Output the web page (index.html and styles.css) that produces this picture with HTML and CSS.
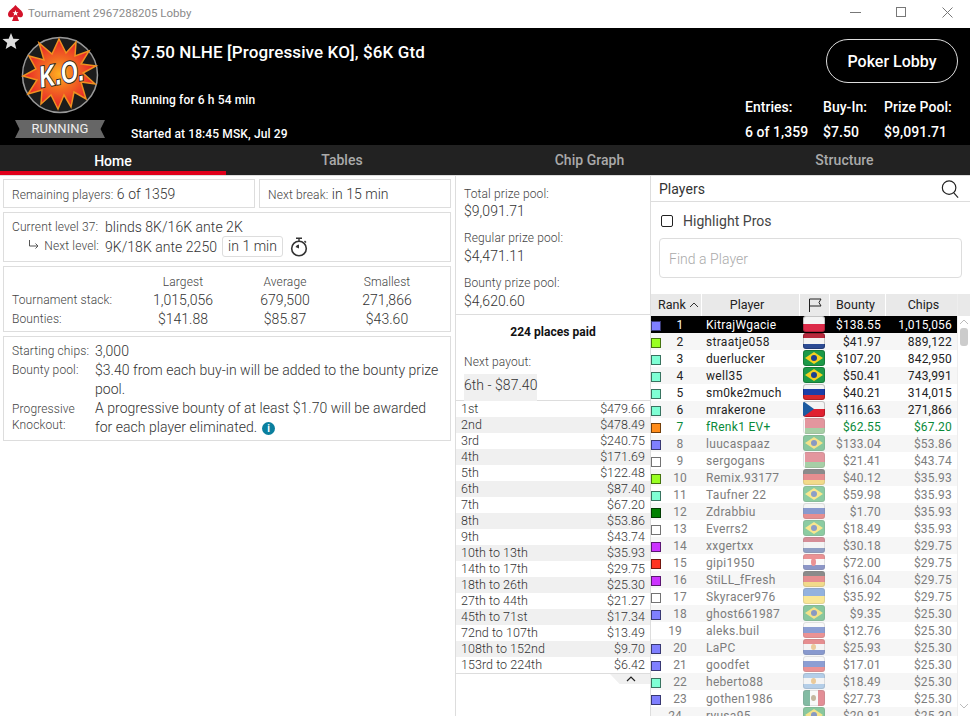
FILE: index.html
```html
<!doctype html>
<html lang="en">
  <head>
    <meta charset="UTF-8" />
    <title>Tournament 2967288205 Lobby</title>
    <link rel="stylesheet" href="styles.css">
  </head>

  <body>
    <div class="titlebar">
      <svg class="spade" viewBox="0 0 15 16" width="15" height="16">
        <path fill="#d3122a" d="M7.500 0 C9.500 3 15 5.500 15 9.500 C15 12.500 11.500 13 9.500 11.500 C9.700 13 10.200 14.500 11 16 L4 16 C4.800 14.500 5.300 13 5.500 11.500 C3.500 13 0 12.500 0 9.500 C0 5.500 5.500 3 7.500 0 Z" />
        <path fill="#fff" d="M7.500 5 L8.300 7.200 L10.500 7.300 L8.800 8.600 L9.400 10.700 L7.500 9.500 L5.600 10.700 L6.200 8.600 L4.500 7.300 L6.700 7.200 Z" />
      </svg>
      <span class="title-text">Tournament 2967288205 Lobby</span>
      <span class="window-btns">
        <svg viewBox="0 0 11 11" width="11" height="11"><path d="M0 5.500H11" stroke="#777" fill="none" /></svg>
        <svg viewBox="0 0 11 11" width="11" height="11"><rect x="0.500" y="0.500" width="9" height="9" stroke="#777" fill="none" /></svg>
        <svg viewBox="0 0 11 11" width="11" height="11"><path d="M0.500 0.500L10.500 10.500M10.500 0.500L0.500 10.500" stroke="#777" fill="none" /></svg>
      </span>
    </div>

    <header class="header">
      <svg class="fav-star" viewBox="0 0 20 20" width="18" height="18">
        <path fill="#ddd" d="M10 1 L12.600 7.400 L19.500 7.900 L14.200 12.300 L15.900 19 L10 15.400 L4.100 19 L5.800 12.300 L0.500 7.900 L7.400 7.400 Z" />
      </svg>
      <div class="logo-col">
        <svg class="ko-logo" viewBox="0 0 78 78" width="78" height="78">
          <defs>
            <radialGradient id="burst" cx="50%" cy="50%" r="50%">
              <stop offset="0" stop-color="#ffb020" />
              <stop offset="0.45" stop-color="#f26a21" />
              <stop offset="1" stop-color="#e8202a" />
            </radialGradient>
          </defs>
          <circle cx="39" cy="39" r="37.500" fill="#1c1c1c" stroke="#999" stroke-width="1.500" />
          <path fill="url(#burst)" stroke="#f09020" stroke-width="1.500" d="M38 3 L45 17 L55 6 L54 20 L68 15 L60 28 L75 30 L62 37 L74 48 L60 46 L65 63 L53 56 L50 71 L43 59 L37 73 L30 59 L20 68 L21 54 L7 58 L16 44 L2 40 L15 33 L8 20 L23 24 L18 7 L31 18 Z" />
          <text class="ko-text" x="18" y="48" textLength="45" lengthAdjust="spacingAndGlyphs" transform="rotate(-10 39 39)">K.O.</text>
        </svg>
        <div class="ribbon">RUNNING</div>
      </div>
      <div class="info-col">
        <h1 class="t-name">$7.50 NLHE [Progressive KO], $6K Gtd</h1>
        <p class="t-run">Running for 6 h 54 min</p>
        <p class="t-start">Started at 18:45 MSK, Jul 29</p>
      </div>
      <div class="right-col">
        <button class="lobby-btn">Poker Lobby</button>
        <div class="sums">
          <span>Entries:</span><span>Buy-In:</span><span>Prize Pool:</span>
          <span>6 of 1,359</span><span>$7.50</span><span>$9,091.71</span>
        </div>
      </div>
    </header>

    <nav class="tabs">
      <a class="tab active">Home</a>
      <a class="tab">Tables</a>
      <a class="tab">Chip Graph</a>
      <a class="tab">Structure</a>
    </nav>

    <main class="content">
      <section class="left">
        <div class="box-row">
          <div class="box box-players"><span class="lbl">Remaining players:</span> 6 of 1359</div>
          <div class="box box-break"><span class="lbl">Next break:</span> in 15 min</div>
        </div>
        <div class="box box-level">
          <span class="lbl">Current level 37:</span>
          <span>blinds 8K/16K ante 2K</span>
          <span class="lbl lbl-right">
            <svg class="arrow" viewBox="0 0 12 10" width="12" height="10"><path d="M1.500 0V6H10M7.500 3.500L10 6L7.500 8.500" fill="none" stroke="#555" /></svg>
            Next level:
          </span>
          <span class="next-val">9K/18K ante 2250
            <span class="pill">in 1 min</span>
            <svg class="watch" viewBox="0 0 18 20" width="18" height="20">
              <circle cx="9" cy="11.500" r="7.300" fill="none" stroke="#333" stroke-width="1.600" />
              <path d="M6 1.200H12M9 1.200V4M14.500 4L16 5.500" fill="none" stroke="#333" stroke-width="1.400" />
              <path d="M9 11.500V7.500A4 4 0 0 0 5.500 10Z" fill="#333" />
            </svg>
          </span>
        </div>
        <div class="box box-stats">
          <span></span><span class="lbl c">Largest</span><span class="lbl c">Average</span><span class="lbl c">Smallest</span>
          <span class="lbl">Tournament stack:</span><span class="c">1,015,056</span><span class="c">679,500</span><span class="c">271,866</span>
          <span class="lbl">Bounties:</span><span class="c">$141.88</span><span class="c">$85.87</span><span class="c">$43.60</span>
        </div>
        <div class="box box-desc">
          <span class="lbl">Starting chips:</span><span>3,000</span>
          <span class="lbl">Bounty pool:</span><span>$3.40 from each buy-in will be added to the bounty prize pool.</span>
          <span class="lbl lbl-tight">Progressive Knockout:</span>
          <span>A progressive bounty of at least $1.70 will be awarded for each player eliminated.<i class="info">i</i></span>
        </div>
      </section>

      <section class="mid">
        <div class="pools">
          <p class="lbl">Total prize pool:</p>
          <p>$9,091.71</p>
          <p class="lbl">Regular prize pool:</p>
          <p>$4,471.11</p>
          <p class="lbl">Bounty prize pool:</p>
          <p>$4,620.60</p>
        </div>
        <div class="paid">
          <p class="paid-title">224 places paid</p>
          <p class="lbl">Next payout:</p>
          <span class="next-payout">6th - $87.40</span>
        </div>
        <ul class="payouts">
          <li><span>1st</span><span>$479.66</span></li>
          <li><span>2nd</span><span>$478.49</span></li>
          <li><span>3rd</span><span>$240.75</span></li>
          <li><span>4th</span><span>$171.69</span></li>
          <li><span>5th</span><span>$122.48</span></li>
          <li><span>6th</span><span>$87.40</span></li>
          <li><span>7th</span><span>$67.20</span></li>
          <li><span>8th</span><span>$53.86</span></li>
          <li><span>9th</span><span>$43.74</span></li>
          <li><span>10th to 13th</span><span>$35.93</span></li>
          <li><span>14th to 17th</span><span>$29.75</span></li>
          <li><span>18th to 26th</span><span>$25.30</span></li>
          <li><span>27th to 44th</span><span>$21.27</span></li>
          <li><span>45th to 71st</span><span>$17.34</span></li>
          <li><span>72nd to 107th</span><span>$13.49</span></li>
          <li><span>108th to 152nd</span><span>$9.70</span></li>
          <li><span>153rd to 224th</span><span>$6.42</span></li>
        </ul>
        <div class="collapse-row">
          <div class="collapse-tab">
            <svg viewBox="0 0 10 6" width="10" height="6"><path d="M1 5L5 1L9 5" fill="none" stroke="#222" stroke-width="1.200" /></svg>
          </div>
        </div>
      </section>

      <section class="right">
        <div class="players-head">
          <span>Players</span>
          <svg viewBox="0 0 20 20" width="18" height="18"><circle cx="9" cy="8.500" r="7.500" fill="none" stroke="#222" stroke-width="1.300" /><path d="M14 14L19 19.500" stroke="#222" stroke-width="1.300" /></svg>
        </div>
        <label class="pros"><span class="check"></span>Highlight Pros</label>
        <div class="find">Find a Player</div>

        <div class="table-wrap">
          <div class="table-scroll">
            <div class="thead">
              <span>Rank<svg viewBox="0 0 10 6" width="10" height="6"><path d="M1 5L5 1L9 5" fill="none" stroke="#333" /></svg></span>
              <span>Player</span>
              <span><svg viewBox="0 0 14 14" width="14" height="14"><path d="M1.500 14V1H13L11 4.500L13 8H1.500" fill="none" stroke="#222" /></svg></span>
              <span>Bounty</span>
              <span>Chips</span>
            </div>
            <div class="tr sel"><span class="rank"><i class="chip c-blue"></i><b>1</b></span><span class="name">KitrajWgacie</span><span class="fl"><i class="flag pl"></i></span><span class="num">$138.55</span><span class="num">1,015,056</span></div>
            <div class="tr"><span class="rank"><i class="chip c-lime"></i><b>2</b></span><span class="name">straatje058</span><span class="fl"><i class="flag nl"></i></span><span class="num">$41.97</span><span class="num">889,122</span></div>
            <div class="tr"><span class="rank"><i class="chip c-aqua"></i><b>3</b></span><span class="name">duerlucker</span><span class="fl"><i class="flag br"></i></span><span class="num">$107.20</span><span class="num">842,950</span></div>
            <div class="tr"><span class="rank"><i class="chip c-aqua"></i><b>4</b></span><span class="name">well35</span><span class="fl"><i class="flag br"></i></span><span class="num">$50.41</span><span class="num">743,991</span></div>
            <div class="tr"><span class="rank"><i class="chip c-aqua"></i><b>5</b></span><span class="name">sm0ke2much</span><span class="fl"><i class="flag ru"></i></span><span class="num">$40.21</span><span class="num">314,015</span></div>
            <div class="tr"><span class="rank"><i class="chip c-aqua"></i><b>6</b></span><span class="name">mrakerone</span><span class="fl"><i class="flag cz"></i></span><span class="num">$116.63</span><span class="num">271,866</span></div>
            <div class="tr me"><span class="rank"><i class="chip c-orange"></i><b>7</b></span><span class="name">fRenk1 EV+</span><span class="fl"><i class="flag by"></i></span><span class="num">$62.55</span><span class="num">$67.20</span></div>
            <div class="tr out"><span class="rank"><i class="chip c-blue"></i><b>8</b></span><span class="name">luucaspaaz</span><span class="fl"><i class="flag br"></i></span><span class="num">$133.04</span><span class="num">$53.86</span></div>
            <div class="tr out"><span class="rank"><i class="chip c-white"></i><b>9</b></span><span class="name">sergogans</span><span class="fl"><i class="flag by"></i></span><span class="num">$21.41</span><span class="num">$43.74</span></div>
            <div class="tr out"><span class="rank"><i class="chip c-lime"></i><b>10</b></span><span class="name">Remix.93177</span><span class="fl"><i class="flag de"></i></span><span class="num">$40.12</span><span class="num">$35.93</span></div>
            <div class="tr out"><span class="rank"><i class="chip c-aqua"></i><b>11</b></span><span class="name">Taufner 22</span><span class="fl"><i class="flag br"></i></span><span class="num">$59.98</span><span class="num">$35.93</span></div>
            <div class="tr out"><span class="rank"><i class="chip c-green"></i><b>12</b></span><span class="name">Zdrabbiu</span><span class="fl"><i class="flag ru"></i></span><span class="num">$1.70</span><span class="num">$35.93</span></div>
            <div class="tr out"><span class="rank"><i class="chip c-white"></i><b>13</b></span><span class="name">Everrs2</span><span class="fl"><i class="flag br"></i></span><span class="num">$18.49</span><span class="num">$35.93</span></div>
            <div class="tr out"><span class="rank"><i class="chip c-purple"></i><b>14</b></span><span class="name">xxgertxx</span><span class="fl"><i class="flag nl"></i></span><span class="num">$30.18</span><span class="num">$29.75</span></div>
            <div class="tr out"><span class="rank"><i class="chip c-red"></i><b>15</b></span><span class="name">gipi1950</span><span class="fl"><i class="flag hr"></i></span><span class="num">$72.00</span><span class="num">$29.75</span></div>
            <div class="tr out"><span class="rank"><i class="chip c-purple"></i><b>16</b></span><span class="name">StiLL_fFresh</span><span class="fl"><i class="flag de"></i></span><span class="num">$16.04</span><span class="num">$29.75</span></div>
            <div class="tr out"><span class="rank"><i class="chip c-white"></i><b>17</b></span><span class="name">Skyracer976</span><span class="fl"><i class="flag ua"></i></span><span class="num">$35.92</span><span class="num">$29.75</span></div>
            <div class="tr out"><span class="rank"><i class="chip c-blue"></i><b>18</b></span><span class="name">ghost661987</span><span class="fl"><i class="flag br"></i></span><span class="num">$9.35</span><span class="num">$25.30</span></div>
            <div class="tr out"><span class="rank"><b>19</b></span><span class="name">aleks.buil</span><span class="fl"><i class="flag ru"></i></span><span class="num">$12.76</span><span class="num">$25.30</span></div>
            <div class="tr out"><span class="rank"><i class="chip c-blue"></i><b>20</b></span><span class="name">LaPC</span><span class="fl"><i class="flag py"></i></span><span class="num">$25.93</span><span class="num">$25.30</span></div>
            <div class="tr out"><span class="rank"><i class="chip c-blue"></i><b>21</b></span><span class="name">goodfet</span><span class="fl"><i class="flag ru"></i></span><span class="num">$17.01</span><span class="num">$25.30</span></div>
            <div class="tr out"><span class="rank"><i class="chip c-aqua"></i><b>22</b></span><span class="name">heberto88</span><span class="fl"><i class="flag ar"></i></span><span class="num">$18.49</span><span class="num">$25.30</span></div>
            <div class="tr out"><span class="rank"><i class="chip c-blue"></i><b>23</b></span><span class="name">gothen1986</span><span class="fl"><i class="flag mx"></i></span><span class="num">$27.73</span><span class="num">$25.30</span></div>
            <div class="tr out"><span class="rank"><b>24</b></span><span class="name">ryusa95</span><span class="fl"><i class="flag br"></i></span><span class="num">$20.81</span><span class="num">$25.30</span></div>
          </div>
          <div class="scrollbar">
            <svg viewBox="0 0 10 6" width="10" height="6"><path d="M1 5L5 1L9 5" fill="none" stroke="#bbb" /></svg>
            <div class="thumb"></div>
            <svg class="down" viewBox="0 0 10 6" width="10" height="6"><path d="M1 1L5 5L9 1" fill="none" stroke="#bbb" /></svg>
          </div>
        </div>
      </section>
    </main>
  </body>
</html>
```

FILE: styles.css
```css
html,
body {
  margin: 0;
  padding: 0;
}

body {
  width: 970px;
  height: 716px;
  overflow: hidden;
  background: white;
  color: #333;
  font-family: Roboto, "Liberation Sans", sans-serif;
  font-size: 14px;
  font-weight: 300;
  letter-spacing: 0.04px;
}

p,
h1,
ul {
  margin: 0;
  padding: 0;
}

.titlebar {
  height: 28px;
  display: flex;
  align-items: center;
  padding: 0 17px 3px 8px;
  box-sizing: border-box;
}

.title-text {
  margin-left: 5px;
  font-size: 11.500px;
  font-weight: 400;
  color: #8a8a8a;
  letter-spacing: 0;
}

.window-btns {
  margin-left: auto;
  display: flex;
  gap: 35px;
}

/* header */

.header {
  position: relative;
  height: 117px;
  background: black;
  color: white;
  display: flex;
  font-weight: 500;
}

.fav-star {
  position: absolute;
  left: 2px;
  top: 4px;
}

.logo-col {
  width: 120px;
  padding-top: 8px;
  box-sizing: border-box;
  display: flex;
  flex-direction: column;
  align-items: center;
}

.ko-text {
  font-family: "Liberation Sans", sans-serif;
  font-size: 30px;
  font-weight: bold;
  font-style: italic;
  fill: white;
  stroke: #222;
  stroke-width: 2px;
  paint-order: stroke;
}

.ribbon {
  margin-top: 6px;
  width: 90px;
  height: 18px;
  background: #666;
  color: #eee;
  font-size: 13px;
  font-weight: 400;
  line-height: 17px;
  text-align: center;
  clip-path: polygon(0 0, 100% 0, 95% 50%, 100% 100%, 0 100%, 5% 50%);
}

.info-col {
  margin-left: 11px;
  flex: 1;
}

.t-name {
  margin-top: 14px;
  font-size: 17px;
  font-weight: 500;
  letter-spacing: 0.12px;
  line-height: 20px;
}

.t-run {
  margin-top: 30px;
  font-size: 12px;
  letter-spacing: 0.12px;
  line-height: 16px;
}

.t-start {
  margin-top: 18px;
  font-size: 12px;
  letter-spacing: 0.12px;
  line-height: 16px;
}

.right-col {
  width: 225px;
  display: flex;
  flex-direction: column;
}

.lobby-btn {
  align-self: flex-end;
  margin: 11px 12px 0 0;
  width: 132px;
  height: 44px;
  background: black;
  border: 1px solid #ddd;
  border-radius: 22px;
  color: white;
  font-family: inherit;
  font-size: 16px;
  font-weight: 500;
}

.sums {
  margin-top: 16px;
  display: grid;
  grid-template-columns: 78px 61px auto;
  row-gap: 9px;
  font-size: 14px;
  line-height: 16px;
}

/* tabs */

.tabs {
  height: 30px;
  background: #222;
  display: grid;
  grid-template-columns: 226px 232px 263px 247px;
  color: #aaa;
  font-size: 14px;
  font-weight: 500;
}

.tab {
  text-align: center;
  line-height: 30px;
}

.tab.active {
  color: white;
  border-bottom: 4px solid #e0001b;
  height: 30px;
  box-sizing: border-box;
  line-height: 32px;
}

/* columns */

.content {
  height: 541px;
  display: flex;
  border-top: 1px solid #ddd;
  box-sizing: border-box;
}

.lbl {
  font-size: 12px;
  letter-spacing: 0.12px;
  color: #444;
}

.left {
  width: 456px;
  box-sizing: border-box;
  border-right: 1px solid #ddd;
  padding: 3px 3px 0 3px;
  display: flex;
  flex-direction: column;
  gap: 4px;
}

.box {
  border: 1px solid #ddd;
  box-sizing: border-box;
  padding-left: 8px;
  width: 448px;
}

.box-row {
  display: flex;
  gap: 4px;
}

.box-players {
  width: 252px;
  height: 29px;
  line-height: 29px;
}

.box-break {
  width: 192px;
  height: 29px;
  line-height: 29px;
}

.box-level {
  height: 50px;
  padding-top: 5px;
  display: grid;
  grid-template-columns: 87px auto;
  grid-auto-rows: 19px;
  column-gap: 6px;
  line-height: 18px;
}

.lbl-right {
  text-align: right;
  white-space: nowrap;
}

.arrow {
  margin-right: 1px;
}

.next-val {
  display: flex;
  align-items: center;
  gap: 5px;
}

.pill {
  border: 1px solid #ddd;
  border-radius: 3px;
  padding: 0 5px;
  line-height: 19px;
}

.watch {
  margin-left: 2px;
}

.box-stats {
  height: 66px;
  padding-top: 6px;
  display: grid;
  grid-template-columns: 120px 102px 102px 102px;
  grid-template-rows: 18px 18px 20px;
  align-items: center;
}

.c {
  text-align: center;
}

.box-desc {
  height: 105px;
  padding: 5px 8px 0 8px;
  display: grid;
  grid-template-columns: 83px auto;
  align-content: start;
  line-height: 19px;
}

.lbl-tight {
  line-height: 16px;
  padding-top: 2px;
}

.info {
  display: inline-block;
  width: 13px;
  height: 13px;
  border-radius: 50%;
  background: #0a7f9e;
  color: white;
  font-size: 10px;
  font-weight: 700;
  font-style: normal;
  line-height: 13px;
  text-align: center;
  margin-left: 5px;
}

.mid {
  width: 195px;
  box-sizing: border-box;
  border-right: 1px solid #ddd;
}

.pools {
  height: 139px;
  box-sizing: border-box;
  padding: 9px 8px 0;
  border-bottom: 1px solid #ddd;
  line-height: 18px;
}

.pools .lbl {
  margin-top: 9px;
}

.pools .lbl:first-child {
  margin-top: 0;
  margin-bottom: -1px;
}

.paid {
  height: 85px;
  box-sizing: border-box;
  padding: 9px 8px 0;
}

.paid-title {
  font-size: 12px;
  font-weight: 700;
  color: #111;
  text-align: center;
  line-height: 16px;
}

.paid .lbl {
  margin-top: 14px;
  line-height: 16px;
}

.next-payout {
  display: inline-block;
  margin-top: 4px;
  background: #f0f0f0;
  line-height: 23px;
  height: 27px;
}

.payouts {
  list-style: none;
  border-top: 1px solid #ddd;
  border-bottom: 1px solid #ddd;
}

.payouts li {
  height: 16px;
  display: flex;
  justify-content: space-between;
  padding: 0 5px;
  font-size: 12.500px;
  line-height: 16px;
}

.payouts li:nth-child(even) {
  background: #f0f0f0;
}

.collapse-row {
  display: flex;
  justify-content: flex-end;
}

.collapse-tab {
  width: 40px;
  height: 10px;
  background: #f0f0f0;
  clip-path: polygon(0 0, 100% 0, 100% 100%, 24% 100%);
  display: flex;
  justify-content: center;
  align-items: center;
  padding-left: 2px;
  box-sizing: border-box;
}

.right {
  flex: 1;
  min-width: 0;
}

.players-head {
  height: 26px;
  box-sizing: border-box;
  border-bottom: 1px solid #ddd;
  padding: 0 11px 0 8px;
  display: flex;
  justify-content: space-between;
  align-items: center;
  font-size: 14px;
  font-weight: 400;
}

.pros {
  height: 36px;
  box-sizing: border-box;
  padding: 2px 0 0 10px;
  display: flex;
  align-items: center;
  gap: 10px;
  font-size: 14px;
  font-weight: 400;
  color: #444;
}

.check {
  width: 10px;
  height: 10px;
  border: 1px solid #222;
  border-radius: 2px;
}

.find {
  margin-left: 8px;
  width: 303px;
  height: 40px;
  box-sizing: border-box;
  border: 1px solid #ddd;
  border-radius: 4px;
  padding-left: 9px;
  color: #aaa;
  font-size: 14px;
  line-height: 40px;
}

/* player table */

.table-wrap {
  margin-top: 16px;
  display: flex;
  height: 422px;
  overflow: hidden;
}

.table-scroll {
  width: 306px;
}

.tr {
  display: grid;
  grid-template-columns: 50px 98px 30px 56px 72px;
}

.thead {
  display: grid;
  width: 319px;
  grid-template-columns: 50px 98px 30px 56px 85px;
  height: 22px;
  background: #e9e9e9;
  font-size: 12.500px;
  font-weight: 400;
  color: #222;
  line-height: 22px;
}

.thead span {
  display: flex;
  justify-content: center;
  align-items: center;
  gap: 3px;
  border-left: 1px solid white;
}

.thead span:first-child {
  border-left: 0;
  justify-content: flex-start;
  padding-left: 7px;
}

.thead span:nth-child(2) {
  padding-right: 7px;
}

.thead span:nth-child(4) {
  padding-right: 4px;
}

.thead span:nth-child(5) {
  padding-right: 9px;
}

.tr {
  height: 17px;
  font-size: 12px;
  font-weight: 400;
  line-height: 19px;
  color: #222;
}

.tr:nth-child(odd) {
  background: #f6f6f6;
}

.tr.sel {
  background: black;
  color: white;
}

.tr.me {
  color: #0a8a3a;
}

.tr.out {
  color: #7d7d7d;
}

.rank {
  display: flex;
  align-items: center;
}

.rank b {
  flex: 1;
  font-weight: inherit;
  text-align: center;
  padding-right: 2px;
}

.chip {
  width: 10px;
  height: 10px;
  box-sizing: border-box;
  border: 1px solid rgba(0, 0, 0, 0.55);
}

.c-blue { background: #7f7fff; }
.c-lime { background: #99ff22; }
.c-aqua { background: #7fffd4; }
.c-orange { background: #ff8c1a; }
.c-white { background: white; }
.c-green { background: #008000; }
.c-purple { background: #cc33ff; }
.c-red { background: #ff3322; }

.name {
  padding-left: 5px;
  white-space: nowrap;
  letter-spacing: 0.3px;
}

.num {
  text-align: right;
  padding-right: 4px;
  letter-spacing: 0.2px;
}

.num:last-child {
  padding-right: 5px;
}

.fl {
  display: flex;
  justify-content: center;
}

.flag {
  position: relative;
  display: block;
  width: 22px;
  height: 16px;
  box-sizing: border-box;
  overflow: hidden;
  border-radius: 3px;
  box-shadow: inset 0 0 0 1px rgba(0, 0, 0, 0.2);
}

.out .flag,
.me .flag {
  opacity: 0.5;
}

.flag.pl { background: linear-gradient(#f4f4f4 50%, #dc2a48 50%); }
.flag.nl { background: linear-gradient(#b8283c 33%, #f4f4f4 33%, #f4f4f4 66%, #2c4b94 66%); }
.flag.ru { background: linear-gradient(#f4f4f4 33%, #1c3fa8 33%, #1c3fa8 66%, #d8282c 66%); }
.flag.de { background: linear-gradient(#222 33%, #d8282c 33%, #d8282c 66%, #f0c020 66%); }
.flag.ua { background: linear-gradient(#2a68c0 50%, #f4d030 50%); }
.flag.hr { background: linear-gradient(#d8282c 33%, #f4f4f4 33%, #f4f4f4 66%, #1c2f90 66%); }
.flag.py { background: linear-gradient(#d8282c 33%, #f4f4f4 33%, #f4f4f4 66%, #1c3fa8 66%); }
.flag.ar { background: linear-gradient(#74a8dc 33%, #f4f4f4 33%, #f4f4f4 66%, #74a8dc 66%); }
.flag.mx { background: linear-gradient(90deg, #0a7a4a 33%, #f4f4f4 33%, #f4f4f4 66%, #c82030 66%); }
.flag.by { background: linear-gradient(90deg, #f4f4f4 2px, transparent 2px), linear-gradient(#c83040 64%, #50a050 64%); }
.flag.cz { background: linear-gradient(#f4f4f4 50%, #e02030 50%); }

.flag.cz::before {
  content: "";
  position: absolute;
  inset: 0;
  background: #1c5aa0;
  clip-path: polygon(0 0, 50% 50%, 0 100%);
}

.flag.br { background: #1c9a48; }

.flag.br::before {
  content: "";
  position: absolute;
  inset: 2px 2px;
  background: #f4d020;
  clip-path: polygon(50% 0, 100% 50%, 50% 100%, 0 50%);
}

.flag.br::after {
  content: "";
  position: absolute;
  left: 8px;
  top: 5px;
  width: 6px;
  height: 6px;
  border-radius: 50%;
  background: #1c3f90;
}

.flag.py::after,
.flag.ar::after,
.flag.hr::after,
.flag.mx::after {
  content: "";
  position: absolute;
  left: 8px;
  top: 5px;
  width: 5px;
  height: 6px;
  border-radius: 50%;
  background: #e0a040;
}

.flag.hr::after {
  background: #d8282c;
  height: 8px;
  top: 4px;
}

.flag.mx::after {
  background: #8a7040;
}

.scrollbar {
  width: 13px;
  box-sizing: border-box;
  border-left: 1px solid #eee;
  display: flex;
  flex-direction: column;
  align-items: center;
  padding-top: 25px;
}

.thumb {
  margin-top: 3px;
  width: 8px;
  height: 18px;
  border-radius: 3px;
  background: #ccc;
}

.down {
  margin-top: auto;
  margin-bottom: 7px;
}
```
